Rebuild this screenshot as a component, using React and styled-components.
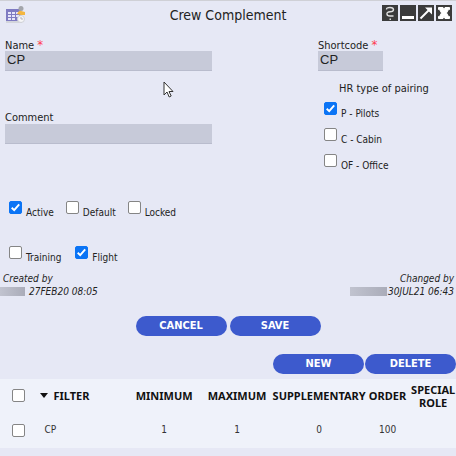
import React from "react";
import styled, { createGlobalStyle } from "styled-components";

const GlobalStyle = createGlobalStyle`
  * { box-sizing: border-box; }
  body {
    margin: 0;
    background: #e6e8f5;
    color: #222;
    font-family: "DejaVu Sans Condensed", "Noto Sans", sans-serif;
    font-size: 10px;
    line-height: 14px;
  }
`;

const Window = styled.main`
  position: relative;
  min-height: 100vh;
  border-top: 1px solid #cfd0d6;
`;

const Header = styled.header`
  display: grid;
  grid-template-columns: 1fr auto 1fr;
  align-items: start;
  height: 36px;
  padding: 4px 4px 0 4px;
`;

const Title = styled.h1`
  margin: 0;
  font-size: 14px;
  line-height: 20px;
  font-weight: 400;
`;

const WindowTools = styled.div`
  display: flex;
  justify-content: flex-end;
  gap: 2px;
`;

const ToolButton = styled.button`
  display: block;
  width: 16px;
  height: 16px;
  padding: 0;
  border: 0;
  background: #3b3b3b;
  svg { display: block; }
`;

const Columns = styled.div`
  display: flex;
  justify-content: space-between;
  height: 160px;
  padding-left: 5px;
`;

const MainFields = styled.div`
  display: flex;
  flex-direction: column;
  gap: 39px;
  width: 46%;
`;

const SideFields = styled.div`
  width: 138px;
`;

const Field = styled.label`
  display: block;
  width: ${(p) => p.$width || "100%"};
  font-size: 11px;
`;

const FieldName = styled.span`
  display: block;
  height: 14px;
  line-height: 16px;
  white-space: nowrap;
`;

const Required = styled.span`
  color: #ff3b4e;
  font-size: 13px;
`;

const TextInput = styled.input`
  display: block;
  width: 100%;
  height: 20px;
  padding: 0 2px 2px;
  border: 0;
  border-bottom: 1px solid #b9bccd;
  border-radius: 0;
  outline: 0;
  background: #c7cad9;
  color: #222;
  font: 13px "Liberation Sans", sans-serif;
`;

const CheckGroup = styled.fieldset`
  display: flex;
  flex-direction: column;
  gap: 8px;
  margin: 0;
  padding: 0 0 0 6px;
  border: 0;
`;

const GroupTitle = styled.legend`
  margin: 0;
  padding: 11px 0 6px 15px;
  font-size: 11px;
`;

const CheckLabel = styled.label`
  display: flex;
  align-items: flex-start;
  gap: 4px;
  height: 18px;
  span { padding-top: 5px; }
`;

const Check = styled.input`
  appearance: none;
  flex: none;
  display: block;
  width: 13px;
  height: 13px;
  margin: 0;
  border: 1px solid #858585;
  border-radius: 2px;
  background: #fff;
  &:checked {
    border-color: #0b74f5;
    background: #0b74f5 url("data:image/svg+xml,%3Csvg xmlns='http://www.w3.org/2000/svg' viewBox='0 0 11 11'%3E%3Cpath d='M1.7 5.7 4.2 8.1 9.2 2.3' fill='none' stroke='white' stroke-width='1.9'/%3E%3C/svg%3E") center / 11px 11px no-repeat;
  }
`;

const CheckRow = styled.div`
  display: flex;
  gap: ${(p) => p.$gap};
  height: 45px;
  padding: 4px 0 0 9px;
`;

const Audit = styled.div`
  display: flex;
  justify-content: space-between;
  height: 44px;
  margin-top: -15px;
  padding-right: 2px;
  font-style: italic;
  line-height: 13px;
`;

const AuditEntry = styled.div`
  text-align: ${(p) => (p.$end ? "right" : "left")};
  > p { margin: 0; padding-left: ${(p) => (p.$end ? "0" : "3px")}; }
`;

const Stamp = styled.div`
  display: flex;
  align-items: center;
  gap: ${(p) => p.$gap};
`;

const Redacted = styled.span`
  width: ${(p) => p.$width};
  height: 9px;
  background: linear-gradient(90deg, #c1c3cf, #aaacb9);
`;

const Actions = styled.div`
  display: flex;
  justify-content: ${(p) => p.$align};
  gap: ${(p) => p.$gap};
  padding-bottom: ${(p) => p.$after};
`;

const PillButton = styled.button`
  width: 91px;
  height: 20px;
  padding: 0;
  border: 0;
  border-radius: 10px;
  background: #3d5acd;
  color: #fff;
  font: 700 11px/20px "DejaVu Sans Condensed", sans-serif;
`;

const Table = styled.table`
  width: 100%;
  table-layout: fixed;
  border-collapse: collapse;
  background: #eff2fa;
  color: #111;
  th, td { padding: 0; text-align: center; }
  th { height: 33px; font: 700 11px/13px "Noto Sans", sans-serif; }
  td { height: 36px; color: #333; }
  th:nth-child(2) { text-align: left; padding-left: 4px; }
  td:nth-child(2) { text-align: left; padding-left: 8px; }
  input { margin-left: 12px; }
`;

const Col = styled.col`
  width: ${(p) => p.$width};
`;

const HeadText = styled.span`
  display: flex;
  justify-content: center;
`;

const SortButton = styled.button`
  display: flex;
  align-items: center;
  gap: 5px;
  padding: 0;
  border: 0;
  background: none;
  color: inherit;
  font: inherit;
`;

const Pointer = styled.svg`
  position: absolute;
  left: 163px;
  top: 80px;
`;

const toolIcons = {
  Help: (
    <>
      <path d="M4.500 4.500Q4.500 2.500 8 2.500t3.500 2.200Q11.500 6.500 8 6.800T5 9q0 2 3 2h3.500" fill="none" stroke="#e0e0e0" strokeWidth="1.4" />
      <path d="M7.500 13.500h1.500v1.500H7.500z" fill="#e0e0e0" />
    </>
  ),
  Minimize: <path d="M2 11h12v3H2z" fill="#fff" />,
  Maximize: (
    <>
      <path d="M2.5 13.5 11 5" fill="none" stroke="#fff" strokeWidth="2" />
      <path d="M7 2.500h7v7l-2.300-2.300-2.400-2.400z" fill="#fff" />
    </>
  ),
  Close: (
    <path
      d="M2.500 2.500H7L8 5l1-2.500h4.500v2h-1L10.500 8l2 3.500h1v2H9L8 11l-1 2.500H2.500v-2h1l2-3.500-2-3.500h-1z"
      fill="#fff"
      stroke="#fff"
      strokeWidth="1"
    />
  ),
};

function ScheduleIcon() {
  return (
    <svg width="22" height="20" viewBox="0 0 22 20" aria-hidden="true">
      <path d="M2 4h16v14H2z" fill="#d3d5dc" />
      <path d="M2 4h15v12H2z" fill="#7f7bc2" />
      <path d="M4 7h3v2H4zM8 7h3v2H8zM12 7h3v2h-3zM4 10h3v2H4zM8 10h3v2H8zM12 10h3v2h-3zM4 13h3v2H4zM8 13h3v2H8z" fill="#e6e5fa" />
      <circle cx="17" cy="3.500" r="2.500" fill="#a3a5ab" />
      <path d="M13 9q2-4 4-3l4 1v3h-4z" fill="#f4b63f" />
      <circle cx="17" cy="14" r="3.500" fill="#f6f6f7" stroke="#cfd1d7" />
      <path d="M17 12v2h2" fill="none" stroke="#b4b5ba" />
    </svg>
  );
}

function CheckItem({ label, checked }) {
  return (
    <CheckLabel>
      <Check type="checkbox" defaultChecked={checked} />
      <span>{label}</span>
    </CheckLabel>
  );
}

export default function App() {
  return (
    <>
      <GlobalStyle />
      <Window>
        <Header>
          <ScheduleIcon />
          <Title>Crew Complement</Title>
          <WindowTools>
            {Object.entries(toolIcons).map(([name, icon]) => (
              <ToolButton key={name} type="button" aria-label={name}>
                <svg width="16" height="16" viewBox="0 0 16 16">{icon}</svg>
              </ToolButton>
            ))}
          </WindowTools>
        </Header>

        <Columns>
          <MainFields>
            <Field>
              <FieldName>Name <Required>*</Required></FieldName>
              <TextInput defaultValue="CP" required />
            </Field>
            <Field>
              <FieldName>Comment</FieldName>
              <TextInput />
            </Field>
          </MainFields>
          <SideFields>
            <Field $width="65px">
              <FieldName>Shortcode <Required>*</Required></FieldName>
              <TextInput defaultValue="CP" required />
            </Field>
            <CheckGroup>
              <GroupTitle>HR type of pairing</GroupTitle>
              <CheckItem label="P - Pilots" checked />
              <CheckItem label="C - Cabin" />
              <CheckItem label="OF - Office" />
            </CheckGroup>
          </SideFields>
        </Columns>

        <CheckRow $gap="12px">
          <CheckItem label="Active" checked />
          <CheckItem label="Default" />
          <CheckItem label="Locked" />
        </CheckRow>
        <CheckRow $gap="14px">
          <CheckItem label="Training" />
          <CheckItem label="Flight" checked />
        </CheckRow>

        <Audit>
          <AuditEntry>
            <p>Created by</p>
            <Stamp $gap="4px">
              <Redacted $width="25px" />
              27FEB20 08:05
            </Stamp>
          </AuditEntry>
          <AuditEntry $end>
            <p>Changed by</p>
            <Stamp $gap="1px">
              <Redacted $width="37px" />
              30JUL21 06:43
            </Stamp>
          </AuditEntry>
        </Audit>

        <Actions $align="center" $gap="3px" $after="18px">
          <PillButton type="button">CANCEL</PillButton>
          <PillButton type="button">SAVE</PillButton>
        </Actions>
        <Actions $align="flex-end" $gap="1px" $after="5px">
          <PillButton type="button">NEW</PillButton>
          <PillButton type="button">DELETE</PillButton>
        </Actions>

        <Table>
          <colgroup>
            <Col $width="8%" />
            <Col $width="20%" />
            <Col $width="16%" />
            <Col $width="16%" />
            <Col $width="20%" />
            <Col $width="10%" />
            <Col $width="10%" />
          </colgroup>
          <thead>
            <tr>
              <th><Check type="checkbox" aria-label="Select all" /></th>
              <th>
                <SortButton type="button">
                  <svg width="8" height="5" viewBox="0 0 8 5" aria-hidden="true">
                    <path d="M0 0h8L4 5z" fill="#111" />
                  </svg>
                  FILTER
                </SortButton>
              </th>
              <th><HeadText>MINIMUM</HeadText></th>
              <th><HeadText>MAXIMUM</HeadText></th>
              <th><HeadText>SUPPLEMENTARY</HeadText></th>
              <th><HeadText>ORDER</HeadText></th>
              <th>SPECIAL ROLE</th>
            </tr>
          </thead>
          <tbody>
            <tr>
              <td><Check type="checkbox" aria-label="Select CP" /></td>
              <td>CP</td>
              <td>1</td>
              <td>1</td>
              <td>0</td>
              <td>100</td>
              <td />
            </tr>
          </tbody>
        </Table>

        <Pointer width="11" height="17" viewBox="0 0 11 17" aria-hidden="true">
          <path d="M1 1v13l3-3 2.200 5 2-1-2.200-4.500H10z" fill="#fff" stroke="#333" />
        </Pointer>
      </Window>
    </>
  );
}
